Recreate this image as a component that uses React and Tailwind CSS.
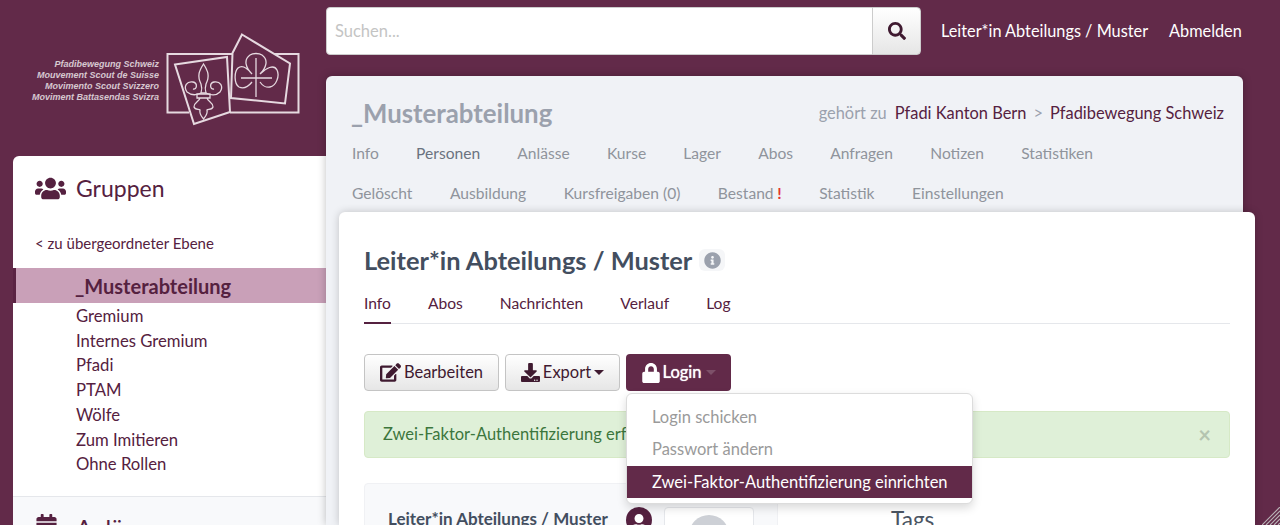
import React from 'react';
import { FaUsers, FaSearch, FaEdit, FaDownload, FaLock, FaCalendarAlt, FaInfoCircle, FaUser } from 'react-icons/fa';

const navTop = [
  { name: 'Info' },
  { name: 'Personen', active: true },
  { name: 'Anlässe' },
  { name: 'Kurse' },
  { name: 'Lager' },
  { name: 'Abos' },
  { name: 'Anfragen' },
  { name: 'Notizen' },
  { name: 'Statistiken' },
];
const navBottom = ['Gelöscht', 'Ausbildung', 'Kursfreigaben (0)', 'Bestand', 'Statistik', 'Einstellungen'];
const groups = ['Gremium', 'Internes Gremium', 'Pfadi', 'PTAM', 'Wölfe', 'Zum Imitieren', 'Ohne Rollen'];
const tabs = ['Info', 'Abos', 'Nachrichten', 'Verlauf', 'Log'];

function Logo() {
  return (
    <div className="flex items-start pt-[30px]">
      <div className="w-[146px] mt-[29px] text-right text-white/75 font-['Liberation_Sans',sans-serif] italic font-bold text-[9px] leading-[11px] whitespace-nowrap">
        <div>Pfadibewegung Schweiz</div>
        <div>Mouvement Scout de Suisse</div>
        <div>Movimento Scout Svizzero</div>
        <div>Moviment Battasendas Svizra</div>
      </div>
      {/* logo drawn in page coordinates minus 165/30 */}
      <svg width="138" height="98" viewBox="165 30 138 98" className="ml-[6px]" fill="none" stroke="#e6d9e0" strokeWidth="1.4">
        <path d="M232 54H167.500V112.500H189M230 112.500H298.500V54H271" strokeWidth="2" />
        <path d="M175 64.500L227 57L230 112L194 124L189.500 110Z" strokeWidth="2" fill="#622a49" />
        <path d="M242 34.500L290 63.500L285 103.500L231 98L232.500 53Z" strokeWidth="2" fill="#622a49" />
        {/* lily */}
        <path d="M203.500 64C199 71 197 76 201 84C202 87 202 90 201 93H206C205 90 205 87 206 84C210 76 208 71 203.500 64Z" strokeWidth="1.300" />
        <path d="M201 93C197 95 192 96 187 92C183 86 187 81 193 82C198 83 197 90 193 89M206 93C210 95 216 96 220 92C224 86 220 81 214 82C209 83 210 90 214 89" strokeWidth="1.300" />
        <path d="M197 94H210V98H197ZM200 98C199 102 194 102 194 107C195 110 199 109 200 110C199 114 202 117 203.500 119C205 117 208 114 207 110C208 109 212 110 213 107C213 102 208 102 207 98" strokeWidth="1.300" />
        {/* trefoil */}
        <path d="M252 74C246 68 243 60 250 55C253 53 259 53 262 55C269 60 266 68 260 74C266 68 274 64 277 70C280 76 276 86 270 87C266 88 262 85 260 82M252 82C248 87 243 89 239 87C234 84 234 72 238 68C243 64 248 69 252 74" strokeWidth="1.300" />
        <path d="M256 58V97M241 78H272" strokeWidth="1.300" />
      </svg>
    </div>
  );
}

function GroupSidebar() {
  return (
    <aside className="bg-white rounded-tl-md h-[369px] text-[#552140] overflow-hidden">
      <div className="flex items-center gap-[10px] pl-[22px] pt-[8px] h-[48px] box-content">
        <FaUsers size={31} />
        <span className="text-[23px] leading-none">Gruppen</span>
      </div>
      <div className="pl-[22px] mt-[21px] text-[15px] leading-5">&lt; zu übergeordneter Ebene</div>
      <div className="mt-[15px] h-[35px] bg-[#c9a0b8] border-l-[3px] border-[#5a2343] pl-[59px] flex items-center text-[20px] font-bold">
        _Musterabteilung
      </div>
      <ul className="pl-[63px] pt-[1px] text-[16.700px] leading-[24.700px]">
        {groups.map((g) => (
          <li key={g}>{g}</li>
        ))}
      </ul>
      <div className="mt-[19px] border-t border-[#e5e7eb] bg-[#f8f9fb] h-[60px] flex gap-[18px] pl-[22px] pt-[17px]">
        <FaCalendarAlt size={23} />
        <span className="text-[24px] leading-7">Anlässe</span>
      </div>
    </aside>
  );
}

function Caret() {
  return <span className="w-0 h-0 border-x-[5px] border-t-[5px] border-x-transparent border-t-current" />;
}

function Button({ className, children }) {
  return (
    <button className={`h-[37px] flex items-center justify-center gap-[3px] rounded border border-[#c4c4c4] bg-gradient-to-b from-white to-[#e6e6e6] text-[#3f1a30] text-[16.500px] ${className}`}>
      {children}
    </button>
  );
}

export default function App() {
  return (
    <div className="relative h-screen overflow-hidden flex bg-[#622a49] font-[Lato,sans-serif]">
      <div className="w-[326px] shrink-0 pl-[13px]">
        <div className="h-[156px]">
          <Logo />
        </div>
        <GroupSidebar />
      </div>

      <div className="w-[917px] shrink-0 flex flex-col">
        <header className="h-[76px] shrink-0 flex items-start pt-[7px]">
          <input
            placeholder="Suchen..."
            className="w-[547px] shrink-0 h-[48px] bg-white rounded-l border border-[#ccc] px-[8px] text-[16.500px] placeholder:text-[#c4c4c4] outline-none"
          />
          <button className="w-[49px] shrink-0 h-[48px] -ml-px flex items-center justify-center rounded-r border border-[#ccc] bg-gradient-to-b from-white to-[#e6e6e6] text-[#3f1a30]">
            <FaSearch size={18} />
          </button>
          <nav className="ml-[20px] h-[48px] flex items-center gap-[21px] text-white text-[16.300px] whitespace-nowrap">
            <span>Leiter*in Abteilungs / Muster</span>
            <span>Abmelden</span>
          </nav>
        </header>

        <main className="relative z-10 flex-1 bg-[#f0f2f6] rounded-t-md shadow-[0_0_8px_rgba(0,0,0,0.25)]">
          <div className="h-[136px] pl-[26px] pr-[19px]">
            <div className="flex items-center justify-between h-[37px] pt-[19px] box-content">
              <h1 className="-ml-px text-[25.800px] font-bold text-[#9ba1ad]">_Musterabteilung</h1>
              <div className="text-[16.400px] text-[#552140] flex items-center whitespace-nowrap">
                <span className="text-[#9ba1ad] mr-[8px]">gehört zu</span>
                <span>Pfadi Kanton Bern</span>
                <span className="text-[#9ba1ad] mx-[7px]">&gt;</span>
                <span>Pfadibewegung Schweiz</span>
              </div>
            </div>
            <nav className="flex gap-[37.200px] mt-[12px] h-[20px] items-center text-[15.600px] text-[#8f949c]">
              {navTop.map((n) => (
                <span key={n.name} className={n.active ? 'text-[#6b7280]' : ''}>
                  {n.name}
                </span>
              ))}
            </nav>
            <nav className="flex gap-[37.500px] mt-[20px] h-[20px] items-center text-[15.600px] text-[#8f949c]">
              {navBottom.map((n) => (
                <span key={n}>
                  {n}
                  {n === 'Bestand' && <span className="text-[#e3342f] font-bold"> !</span>}
                </span>
              ))}
            </nav>
          </div>

          <section className="ml-[13px] -mr-[12px] h-[313px] bg-white rounded-t-md shadow-[0_0_8px_rgba(0,0,0,0.2)] px-[25px] overflow-hidden">
            <div className="flex items-center gap-[7px] pt-[31px] h-[65px]">
              <h2 className="text-[25.400px] leading-8 font-bold text-[#434e5f]">Leiter*in Abteilungs / Muster</h2>
              <span className="w-[26px] h-[22px] rounded-md bg-[#f5f6f8] flex items-center justify-center text-[#9ba1ad]">
                <FaInfoCircle size={17} />
              </span>
            </div>
            <div className="flex gap-[37px] mt-[13px] border-b border-[#e5e7eb] text-[15.600px] text-[#552140]">
              {tabs.map((t, i) => (
                <span key={t} className={`h-[34px] pt-[2px] -mb-px ${i === 0 ? 'border-b-2 border-[#552140]' : ''}`}>
                  {t}
                </span>
              ))}
            </div>

            <div className="flex gap-[6px] mt-[30px]">
              <Button className="w-[135px]">
                <FaEdit size={21} />
                <span>Bearbeiten</span>
              </Button>
              <Button className="w-[115px]">
                <FaDownload size={19} />
                <span>Export</span>
                <Caret />
              </Button>
              <div className="relative">
                <button className="h-[37px] w-[105px] flex items-center justify-center gap-[2px] rounded bg-[#622a49] text-white text-[16.500px] [text-shadow:0_0_1px_white]">
                  <FaLock size={20} />
                  <span>Login</span>
                  <span className="ml-[3px] text-[#7d5069] flex">
                    <Caret />
                  </span>
                </button>
                <div className="absolute z-20 left-0 top-[39px] w-[347px] h-[111px] bg-white rounded-md border border-[#dcdcdc] shadow-[0_4px_10px_rgba(0,0,0,0.15)] pt-[7px] text-[16.500px] text-[#9a9a9a] whitespace-nowrap">
                  <div className="h-[32px] pl-[25px] flex items-center">Login schicken</div>
                  <div className="h-[32px] pl-[25px] flex items-center">Passwort ändern</div>
                  <div className="h-[32px] mt-[1px] pl-[25px] flex items-center bg-[#622a49] text-white">Zwei-Faktor-Authentifizierung einrichten</div>
                </div>
              </div>
            </div>

            <div className="mt-[20px] h-[47px] flex items-center justify-between pl-[18px] pr-[18px] rounded bg-[#dff0d8] border border-[#d6e9c6] text-[#3c763d] text-[16.500px]">
              <span>Zwei-Faktor-Authentifizierung erfolgreich eingerichtet.</span>
              <span className="text-[#b4c4b0] text-[22px] font-bold leading-none">×</span>
            </div>

            <div className="flex mt-[25px]">
              <div className="w-[414px] h-[60px] shrink-0 bg-[#f8f9fb] border border-[#f0f1f4] rounded flex pl-[23px] pt-[23px]">
                <h3 className="w-[238px] text-[17px] leading-6 font-bold text-[#434e5f] whitespace-nowrap">Leiter*in Abteilungs / Muster</h3>
                <span className="w-[26px] h-[26px] rounded-full overflow-hidden bg-[#552140] text-white flex justify-center pt-[7px]">
                  <FaUser size={18} className="shrink-0" />
                </span>
                <div className="ml-[12px] w-[90px] h-[60px] bg-white border border-[#e5e7eb] rounded flex justify-center pt-[7px]">
                  <span className="w-[40px] h-[40px] rounded-full bg-[#cdd0d6]" />
                </div>
              </div>
              <div className="ml-[113px] pt-[23px] text-[22.500px] leading-7 text-[#4b5563]">Tags</div>
            </div>
          </section>
        </main>
      </div>

      {/* resize grip in the window corner */}
      <svg className="absolute right-0 bottom-0" width="18" height="18" viewBox="0 0 18 18" stroke="#b9b2b6" strokeWidth="1.200">
        <path d="M0 18L18 0M4 18L18 4M8 18L18 8M12 18L18 12M16 18L18 16" />
      </svg>
    </div>
  );
}
